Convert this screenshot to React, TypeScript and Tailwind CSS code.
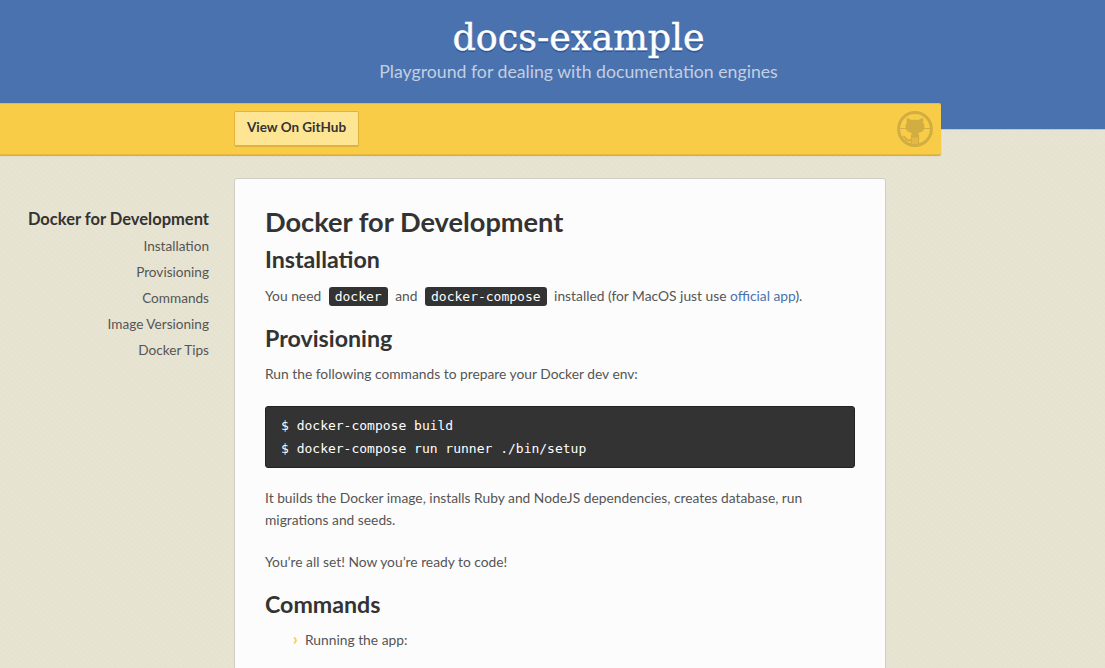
const navItems = ['Installation', 'Provisioning', 'Commands', 'Image Versioning', 'Docker Tips'];

const Octocat = () => (
  <svg viewBox="0 0 36 36" className="h-9 w-9 text-[#d2ad42]" fill="currentColor">
    <circle cx="18" cy="18" r="16.4" fill="none" stroke="currentColor" strokeWidth="3" />
    <path d="M10 7c1.600.2 3.200 1 4.400 2.100 2.300-.5 4.900-.5 7.200 0C22.800 8 24.400 7.200 26 7c.5 1.500.5 3.100 0 4.500 1 1.200 1.500 2.500 1.500 4 0 4.200-2.900 6-6.600 6.500.9.800 1.200 1.800 1.200 3V33h-8.200v-2.600c-2.600.5-4.600-.2-5.800-2.200-.8-1.300-1.700-2-2.700-2.400l.8-1.200c1.400.3 2.500 1.200 3.400 2.500.9 1.200 2.400 1.500 4.300 1v-3.100c0-1.200.3-2.200 1.200-3-3.700-.5-6.600-2.300-6.600-6.500 0-1.500.5-2.800 1.500-4-.5-1.400-.5-3 0-4.500z" />
    <path d="M16 26.500V33M18 26.500V33M20 26.500V33" stroke="#f9cc48" strokeWidth="0.8" />
    <path d="M3 17.500h6M27 17.500h6" stroke="currentColor" strokeWidth="1.100" />
  </svg>
);

const InlineCode = ({ children }: { children: string }) => (
  <code className="mx-[4px] rounded-[3px] bg-[#333333] px-[6px] py-[2px] font-['DejaVu_Sans_Mono',monospace] text-[13px] text-white">
    {children}
  </code>
);

export default function App() {
  return (
    <div className="h-[668px] overflow-hidden bg-[#e7e4d3] bg-[repeating-linear-gradient(45deg,#e7e4d3_0px,#e7e4d3_2px,#e5e2d0_2px,#e5e2d0_4px)] font-['Lato',sans-serif] text-[13.8px] text-[#555555]">
      <header className="h-[130px] border-b border-[#c8c6b8] bg-[#4a72ae] pl-[52px] text-center">
        <h1 className="pt-[15px] font-['DejaVu_Serif',serif] text-[36.5px] leading-[46px] text-white [-webkit-text-stroke:0.4px_white] [text-shadow:0_2px_0_#2f5a9a]">
          docs-example
        </h1>
        <p className="text-[17.7px] leading-[22px] text-[#c3cfe2]">Playground for dealing with documentation engines</p>
      </header>

      <div className="relative -mt-[27px] flex h-[52px] w-[941px] items-center justify-between rounded-r-[2px] border-y border-[#e8b93a] bg-[#f9cc48] pl-[234px] pr-[8px] shadow-[0_1px_1px_rgba(0,0,0,0.25)]">
        <a className="-mt-[1px] flex h-[36px] w-[125px] items-center justify-center rounded-[2px] border border-b-2 border-[#e3b23c] bg-[#fee594] pb-[1px] text-[13.5px] font-bold text-[#333333]">
          View On GitHub
        </a>
        <Octocat />
      </div>

      <div className="mt-[23px] flex items-start">
        <nav className="w-[209px] shrink-0 pt-[30px] text-right text-[13.6px]">
          <div className="text-[16.5px] font-bold leading-[22px] text-[#333333]">Docker for Development</div>
          <ul className="mt-[2px]">
            {navItems.map((item) => (
              <li key={item} className="mt-[8px] leading-[18px] first:mt-[7px]">{item}</li>
            ))}
          </ul>
        </nav>

        <main className="ml-[25px] h-[600px] w-[652px] shrink-0 rounded-[3px] border border-[#cfcdc4] bg-[#fcfcfc] pl-[30px] pr-[30px] pt-[26px]">
          <h1 className="text-[27.2px] font-bold leading-[34px] text-[#333333]">Docker for Development</h1>
          <h2 className="mt-[4px] text-[23.2px] font-bold leading-[32px] text-[#333333]">Installation</h2>
          <p className="mt-[10px] leading-[22px]">
            You need <InlineCode>docker</InlineCode> and <InlineCode>docker-compose</InlineCode> installed (for MacOS just use{' '}
            <a className="text-[#4a72ae]">official app</a>).
          </p>
          <h2 className="mt-[14px] text-[23.2px] font-bold leading-[32px] text-[#333333]">Provisioning</h2>
          <p className="mt-[9px] leading-[22px]">Run the following commands to prepare your Docker dev env:</p>
          <pre className="mt-[21px] h-[62px] rounded-[3px] border border-[#222222] bg-[#333333] px-[15px] py-[7px] font-['DejaVu_Sans_Mono',monospace] text-[13px] leading-[23px] text-white">
            {'$ docker-compose build\n$ docker-compose run runner ./bin/setup'}
          </pre>
          <p className="mt-[19px] leading-[22px]">
            It builds the Docker image, installs Ruby and NodeJS dependencies, creates database, run migrations and seeds.
          </p>
          <p className="mt-[20px] leading-[22px]">You&#8217;re all set! Now you&#8217;re ready to code!</p>
          <h2 className="mt-[15px] text-[23.2px] font-bold leading-[32px] text-[#333333]">Commands</h2>
          <ul className="mt-[9px] pl-[28px]">
            <li className="flex leading-[22px]">
              <span className="w-[12px] text-[16px] font-black leading-[20px] text-[#f9cc48]">›</span>
              Running the app:
            </li>
          </ul>
        </main>
      </div>
    </div>
  );
}
